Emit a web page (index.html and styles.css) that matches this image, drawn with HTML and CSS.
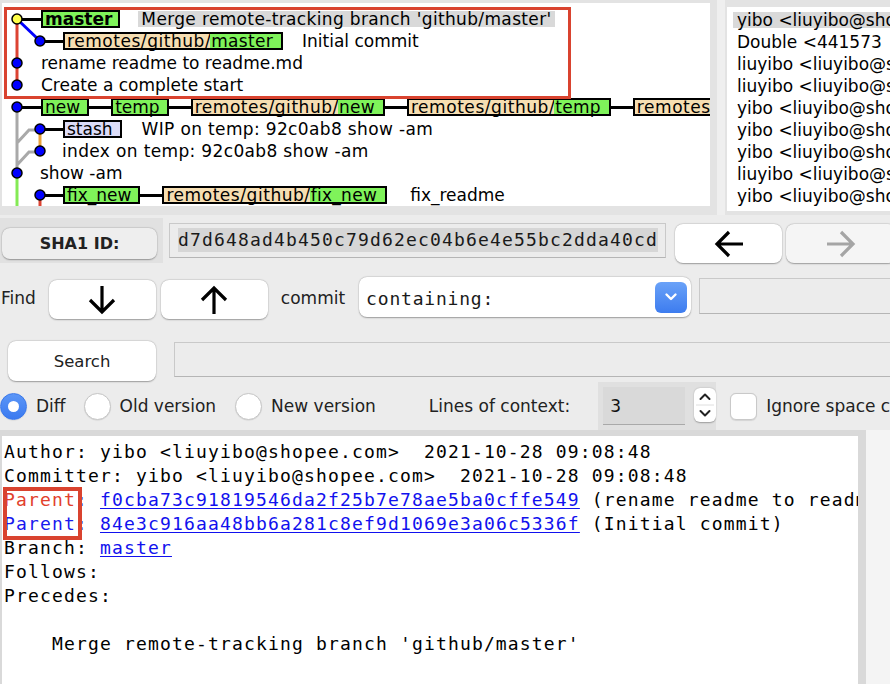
FILE: index.html
```html
<!DOCTYPE html>
<html>
<head>
<meta charset="utf-8">
<title>gitk</title>
<link rel="stylesheet" href="styles.css">
</head>
<body>
<div class="top">
  <div class="graph">
    <svg class="lanes" width="708" height="203" viewBox="0 0 708 203">
      <g fill="none" stroke-width="3">
        <path d="M15 16V82" stroke="#dc4332"/>
        <path d="M15 16L38 38" stroke="#0000ff"/>
        <path d="M15 104V170M15 140L27 127H36M15 162L27 149H36" stroke="#a9a9a9"/>
        <path d="M38 126V148" stroke="#eba33c"/>
        <path d="M15 170V203" stroke="#84ea55"/>
        <path d="M38 192V203" stroke="#dc4332"/>
      </g>
      <g stroke="#000" stroke-width="1.5">
        <circle cx="15" cy="16" r="5" fill="#ffff4a"/>
        <circle cx="38" cy="38" r="5" fill="#0000ff"/>
        <circle cx="15" cy="60" r="5" fill="#0000ff"/>
        <circle cx="15" cy="82" r="5" fill="#0000ff"/>
        <circle cx="15" cy="104" r="5" fill="#0000ff"/>
        <circle cx="38" cy="126" r="5" fill="#0000ff"/>
        <circle cx="38" cy="148" r="5" fill="#0000ff"/>
        <circle cx="15" cy="170" r="5" fill="#0000ff"/>
        <circle cx="38" cy="192" r="5" fill="#0000ff"/>
      </g>
    </svg>
    <div class="row lane0"><span class="link"></span><span class="tag head">master</span><span class="msg sel wide m17">Merge remote-tracking branch 'github/master'</span></div>
    <div class="row lane1"><span class="link short"></span><span class="tag remote"><span class="rp">remotes/github/</span><span class="lp">master</span></span><span class="msg m19">Initial commit</span></div>
    <div class="row text0"><span class="msg">rename readme to readme.md</span></div>
    <div class="row text0"><span class="msg">Create a complete start</span></div>
    <div class="row lane0"><span class="link"></span><span class="tag">new</span><span class="link"></span><span class="tag">temp</span><span class="link"></span><span class="tag remote"><span class="rp">remotes/github/</span><span class="lp">new</span></span><span class="link"></span><span class="tag remote"><span class="rp">remotes/github/</span><span class="lp">temp</span></span><span class="link"></span><span class="tag remote"><span class="rp">remotes/</span></span></div>
    <div class="row lane1"><span class="link short"></span><span class="tag stash">stash</span><span class="msg wide m20">WIP on temp: 92c0ab8 show -am</span></div>
    <div class="row text1"><span class="msg wide">index on temp: 92c0ab8 show -am</span></div>
    <div class="row text0b"><span class="msg">show -am</span></div>
    <div class="row lane1"><span class="link short"></span><span class="tag">fix_new</span><span class="link"></span><span class="tag remote"><span class="rp">remotes/github/</span><span class="lp">fix_new</span></span><span class="msg m21">fix_readme</span></div>
    <div class="annot"></div>
  </div>
  <div class="sash"><div class="grip"></div></div>
  <div class="authors">
    <div class="arow cur"><span class="t">yibo &lt;liuyibo@shopee.com&gt;</span></div>
    <div class="arow"><span class="t">Double &lt;441573</span></div>
    <div class="arow"><span class="t">liuyibo &lt;liuyibo@shopee.com&gt;</span></div>
    <div class="arow"><span class="t">liuyibo &lt;liuyibo@shopee.com&gt;</span></div>
    <div class="arow"><span class="t">yibo &lt;liuyibo@shopee.com&gt;</span></div>
    <div class="arow"><span class="t">yibo &lt;liuyibo@shopee.com&gt;</span></div>
    <div class="arow"><span class="t">yibo &lt;liuyibo@shopee.com&gt;</span></div>
    <div class="arow"><span class="t">liuyibo &lt;liuyibo@shopee.com&gt;</span></div>
    <div class="arow"><span class="t">yibo &lt;liuyibo@shopee.com&gt;</span></div>
  </div>
</div>

<div class="mid">
  <div class="rowA">
    <div class="shaframe"><div class="btn shabtn">SHA1 ID:</div></div>
    <div class="entry sha"><span class="hl">d7d648ad4b450c79d62ec04b6e4e55bc2dda40cd</span></div>
    <div class="btn navbtn back">
      <svg width="32" height="32" viewBox="0 0 32 32"><path d="M30 16H4M16 4L4 16L16 28" fill="none" stroke="#000" stroke-width="3.2"/></svg>
    </div>
    <div class="btn navbtn fwd">
      <svg width="32" height="32" viewBox="0 0 32 32"><path d="M2 16H28M16 4L28 16L16 28" fill="none" stroke="#a5a5a5" stroke-width="3.2"/></svg>
    </div>
  </div>

  <div class="rowB">
    <span class="lbl find">Find</span>
    <div class="btn arrbtn down">
      <svg width="32" height="32" viewBox="0 0 32 32"><path d="M16 2V28M4 16L16 28L28 16" fill="none" stroke="#000" stroke-width="3.2"/></svg>
    </div>
    <div class="btn arrbtn up">
      <svg width="32" height="32" viewBox="0 0 32 32"><path d="M16 30V4M4 16L16 4L28 16" fill="none" stroke="#000" stroke-width="3.2"/></svg>
    </div>
    <span class="lbl commit">commit</span>
    <div class="btn combo">
      <span class="mono ctext">containing:</span>
      <span class="drop">
        <svg width="14" height="10" viewBox="0 0 14 10"><path d="M2.5 2.5L7 7L11.5 2.5" fill="none" stroke="#fff" stroke-width="2.4" stroke-linecap="round" stroke-linejoin="round"/></svg>
      </span>
    </div>
    <div class="entry findfield"></div>
  </div>

  <div class="rowC">
    <div class="btn searchbtn">Search</div>
    <div class="entry searchfield"></div>
  </div>

  <div class="rowD">
    <span class="radio on"><span class="dot"></span></span>
    <span class="lbl rl">Diff</span>
    <span class="radio r2"></span>
    <span class="lbl rl">Old version</span>
    <span class="radio r3"></span>
    <span class="lbl rl">New version</span>
    <span class="lbl ctx">Lines of context:</span>
    <div class="spinframe">
      <div class="spinentry">3</div>
      <div class="stepper">
        <svg width="22" height="34" viewBox="0 0 22 34">
          <path d="M6.5 11L11 6.5L15.5 11" fill="none" stroke="#222" stroke-width="2" stroke-linecap="round" stroke-linejoin="round"/>
          <path d="M2 17H20" stroke="#dedede" stroke-width="1"/>
          <path d="M6.5 23L11 27.5L15.5 23" fill="none" stroke="#222" stroke-width="2" stroke-linecap="round" stroke-linejoin="round"/>
        </svg>
      </div>
    </div>
    <span class="check"></span>
    <span class="lbl ign">Ignore space change</span>
  </div>
</div>

<div class="bottom">
  <div class="textframe">
    <div class="text"><div class="ln">Author: yibo &lt;liuyibo@shopee.com&gt;  2021-10-28 09:08:48</div><div class="ln">Committer: yibo &lt;liuyibo@shopee.com&gt;  2021-10-28 09:08:48</div><div class="ln"><span class="pred">Parent</span><span class="pcol">:</span> <a class="lnk">f0cba73c91819546da2f25b7e78ae5ba0cffe549</a> (rename readme to readme.md)</div><div class="ln"><span class="pblue">Parent</span><span class="pcol">:</span> <a class="lnk">84e3c916aa48bb6a281c8ef9d1069e3a06c5336f</a> (Initial commit)</div><div class="ln">Branch: <a class="lnk">master</a></div><div class="ln">Follows:</div><div class="ln">Precedes:</div><div class="ln"> </div><div class="ln">    Merge remote-tracking branch 'github/master'</div><div class="annot2"></div></div>
  </div>
  <div class="scrollcol"></div>
</div>
</body>
</html>
```

FILE: styles.css
```css
* { box-sizing: border-box; margin: 0; padding: 0; }
html, body { width: 890px; height: 684px; overflow: hidden; }
body {
  background: #ececec;
  font-family: "DejaVu Sans", "Noto Sans", sans-serif;
  font-size: 17px;
  color: #1e1e1e;
}

/* ---------- top pane ---------- */
.top { display: flex; align-items: flex-start; height: 215px; background: #e3e3e3; }
.graph {
  position: relative; flex: none;
  margin: 3px 0 0 2px; width: 708px; height: 203px;
  background: #fff; overflow: hidden; padding-top: 5px; color: #000;
}
.lanes { position: absolute; left: 0; top: 0; }
.row { position: relative; height: 22px; display: flex; align-items: center; white-space: nowrap; }
.row > * { flex-shrink: 0; }
.lane0 { padding-left: 20px; }
.lane1 { padding-left: 43px; }
.text0 { padding-left: 39px; }
.text0b { padding-left: 38px; }
.text1 { padding-left: 60px; }
.link { display: inline-block; width: 22px; height: 3px; background: #000; }
.lane0 > .link:first-child { width: 19px; }
.link.short { width: 18px; }
.tag {
  display: inline-flex; align-items: center; height: 18px;
  border: 2px solid #000; background: #7ff35a;
  padding: 0 7px 0 2px; line-height: 14px;
}
.tag.head { font-weight: bold; padding-right: 6px; }
.tag.stash { background: #dcdcf8; }
.tag.remote { background: #f6deb2; padding: 0; }
.tag.remote .rp { padding-left: 2px; letter-spacing: 0.55px; }
.tag.remote .lp { background: #7ff35a; height: 100%; display: inline-flex; align-items: center; padding: 0 8px 0 1px; margin-left: -1px; letter-spacing: 0.3px; }
.msg { display: inline-block; }
.wide { letter-spacing: 0.35px; }
.sel { background: #d9d9d9; height: 16px; line-height: 16px; padding: 0 3px 0 3px; }
.m17 { margin-left: 18px; }
.m19 { margin-left: 19px; }
.m20 { margin-left: 20px; }
.m21 { margin-left: 23px; }
.annot {
  position: absolute; left: 2px; top: 4px; width: 567px; height: 92px;
  border: 3px solid #d9432f;
}
.sash { flex: none; width: 17px; height: 215px; display: flex; padding-left: 7px; }
.grip { width: 8px; height: 100%; background: #efefef; }
.authors {
  flex: none; margin-top: 7px; width: 163px; height: 204px;
  background: #fff; padding-top: 2px; overflow: hidden; color: #000;
}
.arow { height: 22px; display: flex; align-items: center; padding-left: 6px; white-space: nowrap; }
.arow .t { flex: none; height: 16px; line-height: 16px; padding-left: 4px; width: 200px; }
.arow.cur .t { background: #d9d9d9; }

/* ---------- middle controls ---------- */
.mid { height: 215px; display: flex; flex-direction: column; }
.btn {
  background: #fff; border-radius: 8px;
  box-shadow: 0 0.5px 1.5px rgba(0,0,0,0.32), 0 0 0 0.5px rgba(0,0,0,0.06);
  display: flex; align-items: center; justify-content: center; flex: none;
}
.entry { background: #ececec; border: 1px solid #c9c9c9; border-bottom-color: #b5b5b5; flex: none; }
.mono { font-family: "DejaVu Sans Mono", "Liberation Mono", monospace; font-size: 18px; }
.lbl { flex: none; line-height: 42px; white-space: nowrap; color: #222; }

.rowA { display: flex; align-items: flex-start; margin-top: 3px; height: 45px; }
.shaframe { flex: none; width: 163px; height: 45px; background: #e1e1e1; padding: 10px 0 0 2px; }
.shabtn { width: 155px; height: 31px; background: #eeeeee; font-weight: bold; font-size: 16px; color: #222; }
.sha { margin: 5px 0 0 6px; width: 497px; height: 35px; padding: 4px 0 0 8px; }
.sha .hl {
  display: inline-block; background: #d6d6d6; height: 24px; line-height: 24px;
  font-family: "DejaVu Sans Mono", "Liberation Mono", monospace; font-size: 18px;
  letter-spacing: 1.16px; color: #1a1a1a;
}
.navbtn { margin: 6px 0 0 9px; width: 107px; height: 39px; }
.fwd { margin-left: 4px; width: 110px; background: #f5f5f5; }

.rowB { display: flex; align-items: flex-start; margin-top: 14px; height: 42px; }
.find { margin-left: 1px; }
.arrbtn { margin-top: 3px; width: 107px; height: 39px; }
.down { margin-left: 13px; }
.up { margin-left: 5px; }
.commit { margin-left: 13px; }
.combo { margin-left: 14px; width: 332px; height: 40px; justify-content: space-between; padding: 0 4px 0 7px; border-radius: 8px; }
.ctext { letter-spacing: 0.8px; color: #1a1a1a; padding-top: 2px; }
.drop {
  width: 32px; height: 31px; border-radius: 6px;
  background: linear-gradient(#6aa2f8, #3d7cef);
  display: flex; align-items: center; justify-content: center;
}
.findfield { margin: 1px 0 0 8px; width: 200px; height: 36px; }

.rowC { display: flex; align-items: flex-start; margin-top: 22px; height: 40px; }
.searchbtn { margin-left: 8px; width: 148px; height: 40px; color: #222; font-size: 16.5px; }
.searchfield { margin: 1px 0 0 18px; width: 720px; height: 35px; }

.rowD { display: flex; align-items: center; margin-top: 1px; height: 48px; }
.radio {
  flex: none; width: 27px; height: 27px; border-radius: 50%;
  background: #fff; border: 1px solid #c6c6c6;
  box-shadow: 0 0.5px 1px rgba(0,0,0,0.12);
  display: flex; align-items: center; justify-content: center;
}
.radio.on { background: linear-gradient(#5b96f7, #3b7af0); border-color: #3a78ea; }
.radio .dot { width: 11px; height: 11px; border-radius: 50%; background: #fff; }
.rl { margin-left: 9px; }
.r2 { margin-left: 18px; }
.r3 { margin-left: 19px; }
.ctx { margin-left: 53px; }
.spinframe {
  flex: none; margin-left: 28px; width: 118px; height: 48px; background: #e0e0e0;
  display: flex; align-items: flex-start;
}
.spinentry {
  margin: 5px 0 0 5px; width: 82px; height: 38px; background: #d9d9d9;
  border-bottom: 1px solid #a9a9a9; padding-left: 7px; line-height: 38px; color: #111;
}
.stepper {
  margin: 6px 0 0 9px; width: 22px; height: 34px; background: #fff; border-radius: 6px;
  box-shadow: 0 0.5px 1.5px rgba(0,0,0,0.3);
}
.stepper svg { display: block; }
.check {
  flex: none; margin-left: 14px; width: 27px; height: 27px; border-radius: 6px;
  background: #fff; border: 1px solid #c9c9c9; box-shadow: 0 0.5px 1px rgba(0,0,0,0.1);
}
.ign { margin-left: 9px; }

/* ---------- bottom text ---------- */
.bottom { display: flex; height: 254px; }
.textframe { flex: none; width: 866px; height: 254px; background: #d9d9d9; padding: 6px 8px 0 2px; }
.text {
  position: relative; background: #fff; height: 100%; overflow: hidden;
  padding: 4px 0 0 2px;
  font-family: "DejaVu Sans Mono", "Liberation Mono", monospace; font-size: 18px;
  letter-spacing: 1.16px; line-height: 24px; color: #000; white-space: pre;
}
.ln { height: 24px; }
.lnk { color: #1111ee; text-decoration: underline; text-underline-offset: 2px; }
.pred { color: #e2402c; }
.pblue { color: #1818ee; }
.pcol { color: #3a3aee; }
.annot2 {
  position: absolute; left: 1px; top: 51px; width: 79px; height: 53px;
  border: 4px solid #d9432f;
}
.scrollcol { flex: 1; background: #f4f4f4; }
```
